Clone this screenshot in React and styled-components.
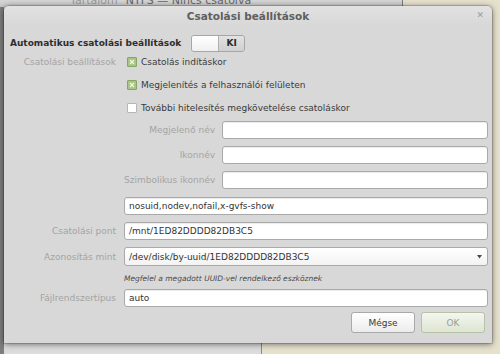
import styled, { createGlobalStyle } from 'styled-components';

const GlobalStyle = createGlobalStyle`
  html, body { margin: 0; padding: 0; }
  body {
    font-family: "DejaVu Sans", "Liberation Sans", sans-serif;
    font-size: 9px;
    color: #3c3c3c;
  }
`;

const Desktop = styled.div`
  position: relative;
  width: 500px;
  height: 354px;
  overflow: hidden;
  background: #e6e1cd;
`;

const BackWindow = styled.div`
  position: absolute;
  left: 0;
  top: -20px;
  width: 262px;
  height: 390px;
  background: #dcdcdc;
  border-left: 4px solid #7e7e7e;
  border-right: 1px solid #8a8a8a;
  box-sizing: border-box;
`;

const BackHeader = styled.div`
  position: absolute;
  left: 0;
  top: -12px;
  width: 403px;
  height: 19px;
  display: flex;
  align-items: flex-end;
  padding-left: 70px;
  box-sizing: border-box;
  background: linear-gradient(#ececec, #c9c9c9);
  border-right: 1px solid #7a7a7a;
  font-size: 11px;
  color: #666;
  gap: 8px;
  span:first-child { color: #9a9a9a; }
`;

const Dialog = styled.div`
  position: absolute;
  left: 4px;
  top: 6px;
  width: 488px;
  height: 337px;
  background: #d8d8d8;
  border-radius: 5px 5px 0 0;
  box-shadow: 0 1px 6px rgba(0, 0, 0, 0.55), 0 0 0 1px rgba(0, 0, 0, 0.15);
  display: flex;
  flex-direction: column;
`;

const TitleBar = styled.div`
  height: 20px;
  display: flex;
  align-items: center;
  justify-content: center;
  position: relative;
  font-size: 10.5px;
  font-weight: bold;
  color: #5f5f5f;
  background: linear-gradient(#e2e2e2, #d8d8d8);
  border-radius: 5px 5px 0 0;
`;

const Close = styled.span`
  position: absolute;
  right: 8px;
  top: 4px;
  font-size: 9px;
  color: #9c9c9c;
  font-weight: normal;
`;

const Body = styled.div`
  display: flex;
  flex-direction: column;
  padding: 0 4px 0 6px;
`;

const AutoRow = styled.div`
  display: flex;
  align-items: center;
  gap: 10px;
  margin-top: 8px;
  height: 18px;
  font-weight: bold;
  color: #2e2e2e;
`;

const Switch = styled.div`
  display: flex;
  width: 54px;
  height: 17px;
  border: 1px solid #a6a6a6;
  border-radius: 3px;
  box-sizing: border-box;
  overflow: hidden;
  background: #d3d3d3;
`;

const Knob = styled.div`
  flex: 1;
  background: linear-gradient(#ffffff, #f0f0f0);
  border-right: 1px solid #b0b0b0;
`;

const SwitchText = styled.div`
  flex: 1;
  display: flex;
  align-items: center;
  justify-content: center;
  font-weight: bold;
  color: #2a2a2a;
  background: linear-gradient(#e2e2e2, #d0d0d0);
`;

const FormRow = styled.div`
  display: grid;
  grid-template-columns: 106px 1fr;
  column-gap: 8px;
  align-items: center;
  margin-top: ${p => p.$mt}px;
`;

const Label = styled.div`
  text-align: right;
  color: #a4a4a4;
  white-space: nowrap;
  align-self: ${p => (p.$top ? 'start' : 'center')};
  line-height: ${p => (p.$top ? '14px' : 'normal')};
`;

const CheckGroup = styled.div`
  display: flex;
  flex-direction: column;
  gap: 9px;
`;

const CheckRow = styled.label`
  display: flex;
  align-items: center;
  gap: 4px;
  height: 14px;
  padding-left: 3px;
  color: #3a3a3a;
`;

const Box = styled.span`
  width: 10px;
  height: 10px;
  box-sizing: border-box;
  display: inline-flex;
  border: 1px solid ${p => (p.$on ? '#88a565' : '#b5b5b5')};
  background: ${p => (p.$on ? '#a9c585' : '#ffffff')};
  border-radius: 1px;
`;

const SubGrid = styled.div`
  display: grid;
  grid-template-columns: 91px 1fr;
  column-gap: 7px;
  align-items: center;
`;

const Entry = styled.div`
  height: 18px;
  box-sizing: border-box;
  background: #ffffff;
  border: 1px solid #a9a9a9;
  border-radius: 3px;
  box-shadow: inset 0 1px 1px rgba(0, 0, 0, 0.08);
  display: flex;
  align-items: center;
  padding-left: 4px;
  color: #333;
  font-size: 9px;
`;

const Combo = styled(Entry)`
  height: 19px;
  justify-content: space-between;
  padding-right: 5px;
  background: linear-gradient(#ffffff, #f3f3f3);
  box-shadow: none;
`;

const Hint = styled.div`
  font-style: italic;
  font-size: 7.5px;
  color: #4a4a4a;
  height: 12px;
  line-height: 12px;
`;

const ButtonRow = styled.div`
  display: flex;
  justify-content: flex-end;
  gap: 6px;
  margin-top: 5px;
  padding-right: 3px;
`;

const Button = styled.button`
  width: 64px;
  height: 21px;
  border-radius: 3px;
  font-family: inherit;
  font-size: 9px;
  border: 1px solid ${p => (p.$primary ? '#b6c2a8' : '#a9a9a9')};
  color: ${p => (p.$primary ? '#9aa092' : '#3a3a3a')};
  background: ${p => (p.$primary
    ? 'linear-gradient(#f4f6f0, #dde5d2)'
    : 'linear-gradient(#ffffff, #ececec)')};
  padding: 0;
`;

function CheckBox({ on }) {
  return (
    <Box $on={on}>
      {on && (
        <svg width="8" height="8" viewBox="0 0 8 8">
          <path d="M2 2 L6 6 M6 2 L2 6" stroke="#f2f7ea" strokeWidth="1.1" />
        </svg>
      )}
    </Box>
  );
}

function DropArrow() {
  return (
    <svg width="5" height="4" viewBox="0 0 5 4">
      <path d="M0 0 H5 L2.5 3.5 Z" fill="#4a4a4a" />
    </svg>
  );
}

export default function App() {
  return (
    <>
      <GlobalStyle />
      <Desktop>
        <BackWindow />
        <BackHeader>
          <span>Tartalom</span>
          <span>NTFS — Nincs csatolva</span>
        </BackHeader>
        <Dialog>
          <TitleBar>
            Csatolási beállítások
            <Close>✕</Close>
          </TitleBar>
          <Body>
            <AutoRow>
              Automatikus csatolási beállítások
              <Switch>
                <Knob />
                <SwitchText>KI</SwitchText>
              </Switch>
            </AutoRow>

            <FormRow $mt={3}>
              <Label $top>Csatolási beállítások</Label>
              <CheckGroup>
                <CheckRow><CheckBox on />Csatolás indításkor</CheckRow>
                <CheckRow><CheckBox on />Megjelenítés a felhasználói felületen</CheckRow>
                <CheckRow><CheckBox />További hitelesítés megkövetelése csatoláskor</CheckRow>
              </CheckGroup>
            </FormRow>

            <FormRow $mt={6}>
              <span />
              <SubGrid>
                <Label>Megjelenő név</Label>
                <Entry />
              </SubGrid>
            </FormRow>
            <FormRow $mt={7}>
              <span />
              <SubGrid>
                <Label>Ikonnév</Label>
                <Entry />
              </SubGrid>
            </FormRow>
            <FormRow $mt={7}>
              <span />
              <SubGrid>
                <Label>Szimbolikus ikonnév</Label>
                <Entry />
              </SubGrid>
            </FormRow>
            <FormRow $mt={8}>
              <span />
              <Entry>nosuid,nodev,nofail,x-gvfs-show</Entry>
            </FormRow>
            <FormRow $mt={7}>
              <Label>Csatolási pont</Label>
              <Entry>/mnt/1ED82DDDD82DB3C5</Entry>
            </FormRow>
            <FormRow $mt={7}>
              <Label>Azonosítás mint</Label>
              <Combo>
                /dev/disk/by-uuid/1ED82DDDD82DB3C5
                <DropArrow />
              </Combo>
            </FormRow>
            <FormRow $mt={7}>
              <span />
              <Hint>Megfelel a megadott UUID-vel rendelkező eszköznek</Hint>
            </FormRow>
            <FormRow $mt={4}>
              <Label>Fájlrendszertípus</Label>
              <Entry>auto</Entry>
            </FormRow>
            <ButtonRow>
              <Button>Mégse</Button>
              <Button $primary>OK</Button>
            </ButtonRow>
          </Body>
        </Dialog>
      </Desktop>
    </>
  );
}
